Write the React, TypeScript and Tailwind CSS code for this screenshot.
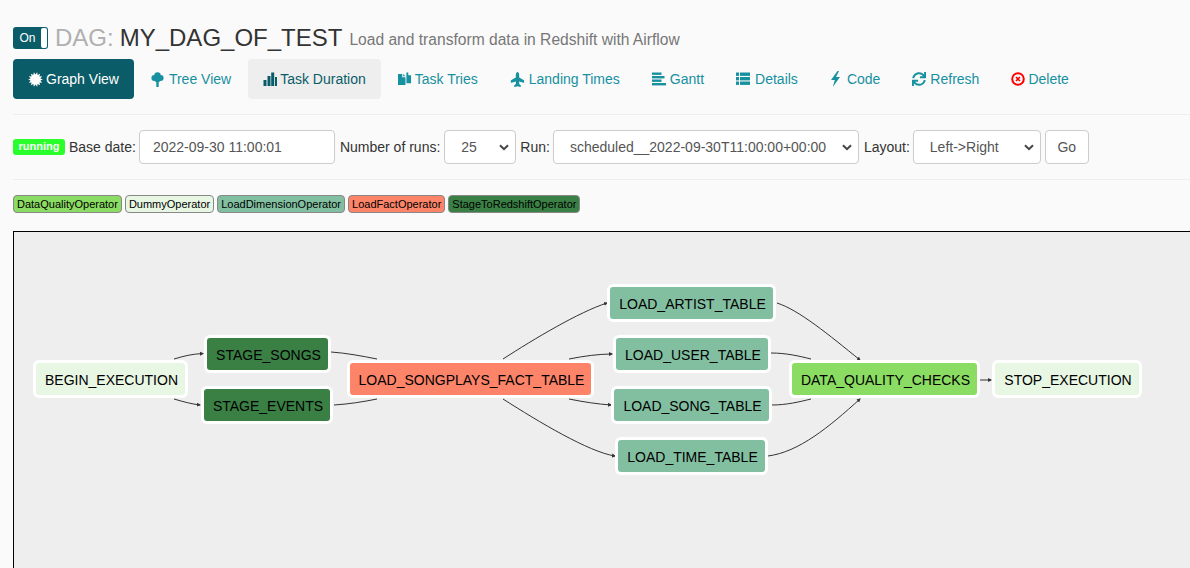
import React from "react";
import { FaPlane, FaSync } from "react-icons/fa";

const font = { fontFamily: '"Liberation Sans", Arial, sans-serif' };

function burst() {
  const pts: string[] = [];
  for (let i = 0; i < 28; i++) {
    const r = i % 2 === 0 ? 7.4 : 5;
    const a = (i / 28) * Math.PI * 2;
    pts.push((7.5 + r * Math.cos(a)).toFixed(2) + "," + (7.5 + r * Math.sin(a)).toFixed(2));
  }
  return pts.join(" ");
}

const IconBurst = () => (
  <svg width="15" height="15" viewBox="0 0 15 15"><polygon points={burst()} fill="currentColor" /></svg>
);
const IconTree = () => (
  <svg width="13" height="15" viewBox="0 0 13 15" fill="currentColor">
    <circle cx="6.5" cy="3.4" r="3.2" /><circle cx="3.4" cy="6" r="3" /><circle cx="9.6" cy="6" r="3" /><circle cx="6.5" cy="7" r="3.2" />
    <rect x="5.3" y="8" width="2.4" height="7" />
  </svg>
);
const IconStats = () => (
  <svg width="14" height="14" viewBox="0 0 14 14" fill="currentColor">
    <rect x="0.5" y="8" width="3" height="6" /><rect x="4.5" y="4" width="3" height="10" /><rect x="8.2" y="0.5" width="3" height="13.5" /><rect x="12" y="5" width="2" height="9" />
  </svg>
);
const IconTries = () => (
  <svg width="15" height="15" viewBox="0 0 15 15" fill="currentColor">
    <path d="M0 1.5 H4.5 V5 H8 V13.5 H0 Z" /><path d="M5.5 1.5 L8 4 H5.5 Z" />
    <path d="M9 0 H11 V3 H14 V11.5 H9 V4 L9 3 Z" />
  </svg>
);
const IconGantt = () => (
  <svg width="14" height="14" viewBox="0 0 14 14" fill="currentColor">
    <rect x="0" y="0.5" width="9.5" height="2.4" /><rect x="0" y="4" width="12.5" height="2.4" /><rect x="0" y="7.5" width="9.5" height="2.4" /><rect x="0" y="11" width="14" height="2.4" />
  </svg>
);
const IconList = () => (
  <svg width="14" height="14" viewBox="0 0 14 14" fill="currentColor">
    {[0.5, 5, 9.5].map((y) => (
      <g key={y}><rect x="0" y={y} width="3" height="3.4" /><rect x="4" y={y} width="10" height="3.4" /></g>
    ))}
  </svg>
);
const IconBolt = () => (
  <svg width="11" height="16" viewBox="0 0 11 16" fill="currentColor"><path d="M7.5 0 L1 9 L4.8 9 L2.8 16 L10 6 L6 6 L9 0 Z" /></svg>
);
const IconDelete = () => (
  <svg width="14" height="14" viewBox="0 0 14 14" fill="none" stroke="#f00">
    <circle cx="7" cy="7" r="5.8" strokeWidth="2" /><path d="M5 5 L9 9 M9 5 L5 9" strokeWidth="1.6" />
  </svg>
);

function Tab({ icon, label, active, hover, iw }: { icon: React.ReactNode; label: string; active?: boolean; hover?: boolean; iw: string }) {
  const cls = active
    ? "bg-[#0a5c68] text-white"
    : hover
    ? "bg-[#eeeeee] text-[#0a5c68]"
    : "text-[#17909f]";
  return (
    <a className={"flex h-10 items-center rounded px-[15px] text-sm " + cls}>
      <span className={"mr-[3px] flex items-center justify-start " + iw}>{icon}</span>
      {label}
    </a>
  );
}

function Legend({ label, cls }: { label: string; cls: string }) {
  return <span className={"flex h-[18px] items-center rounded-[4px] border border-[#888] px-[3px] text-[11px] text-black " + cls}>{label}</span>;
}

function Field({ children, cls }: { children: React.ReactNode; cls: string }) {
  return <div className={"flex h-[34px] items-center rounded border border-[#cccccc] bg-white text-sm text-[#555555] " + cls}>{children}</div>;
}

function Chevron() {
  return (
    <svg width="10" height="7" viewBox="0 0 10 7" className="ml-auto">
      <path d="M1 1.2 L5 5.2 L9 1.2" fill="none" stroke="#444" strokeWidth="2" />
    </svg>
  );
}

const nodes = [
  { t: "BEGIN_EXECUTION", x: 20, y: 129, w: 155, c: "bg-[#e8f7e4]" },
  { t: "STAGE_SONGS", x: 191, y: 104, w: 127, c: "bg-[#3a8045]" },
  { t: "STAGE_EVENTS", x: 188, y: 155, w: 132, c: "bg-[#3a8045]" },
  { t: "LOAD_SONGPLAYS_FACT_TABLE", x: 334, y: 129, w: 247, c: "bg-[#fd8469]" },
  { t: "LOAD_ARTIST_TABLE", x: 594, y: 53, w: 169, c: "bg-[#82bfa1]" },
  { t: "LOAD_USER_TABLE", x: 600, y: 104, w: 158, c: "bg-[#82bfa1]" },
  { t: "LOAD_SONG_TABLE", x: 598, y: 155, w: 161, c: "bg-[#82bfa1]" },
  { t: "LOAD_TIME_TABLE", x: 602, y: 206, w: 153, c: "bg-[#82bfa1]" },
  { t: "DATA_QUALITY_CHECKS", x: 776, y: 129, w: 191, c: "bg-[#8bdc62]" },
  { t: "STOP_EXECUTION", x: 979, y: 129, w: 150, c: "bg-[#e8f7e4]" },
];

// coordinates relative to the canvas's padding box
const edges = [
  { d: "M160 127 C170 124 178 122 189 121.5", m: true },
  { d: "M160 167 C170 170 178 172 186 173", m: true },
  { d: "M317 120 C332 121 348 124 363 127", m: false },
  { d: "M320 173 C335 172 348 170 363 167", m: false },
  { d: "M489 127 C520 107 565 80 593 71", m: true },
  { d: "M555 127 C570 124 585 122 598 122", m: true },
  { d: "M555 167 C570 170 583 172 597 173", m: true },
  { d: "M489 167 C525 190 575 220 601 224", m: true },
  { d: "M763 71 C785 78 815 103 846 128", m: true },
  { d: "M757 121 C772 121 785 124 797 127", m: false },
  { d: "M758 173 C772 173 785 170 797 167", m: false },
  { d: "M754 224 C785 220 815 195 846 167", m: true },
  { d: "M966 148 L977 148", m: true },
];

export default function App() {
  return (
    <div className="h-[568px] w-[1190px] overflow-hidden bg-[#fafafa] pl-[13px] text-[#333333]" style={font}>
      <div className="flex h-[59px] items-center pt-[17px]">
        <div className="flex h-[22px] w-[35px] items-stretch overflow-hidden rounded-[3px] bg-[#0a5c68] p-[1px]">
          <span className="flex flex-1 items-center justify-center text-xs text-white">On</span>
          <span className="w-[6px] rounded-[2px] bg-white"></span>
        </div>
        <span className="ml-[7px] text-2xl text-[#b0b0b0]">DAG:</span>
        <span className="ml-[6px] text-2xl text-[#333333]">MY_DAG_OF_TEST</span>
        <span className="ml-[7px] mt-[3px] text-[15.6px] text-[#777777]">Load and transform data in Redshift with Airflow</span>
      </div>

      <nav className="flex h-10 items-center gap-[2px]">
        <Tab active iw="w-[15px]" label="Graph View" icon={<IconBurst />} />
        <Tab iw="w-[15px]" label="Tree View" icon={<IconTree />} />
        <Tab hover iw="w-[14px]" label="Task Duration" icon={<IconStats />} />
        <Tab iw="w-[14px]" label="Task Tries" icon={<IconTries />} />
        <Tab iw="w-[16px]" label="Landing Times" icon={<FaPlane size={15} className="-rotate-90" />} />
        <Tab iw="w-[15px]" label="Gantt" icon={<IconGantt />} />
        <Tab iw="w-[16px]" label="Details" icon={<IconList />} />
        <Tab iw="w-[14px]" label="Code" icon={<IconBolt />} />
        <Tab iw="w-[15px]" label="Refresh" icon={<FaSync size={14} />} />
        <Tab iw="w-[14px]" label="Delete" icon={<IconDelete />} />
      </nav>

      <div className="mt-[15px] flex h-[66px] items-center border-y border-[#eeeeee] text-sm">
        <span className="flex h-4 w-[52px] items-center justify-center rounded-[3px] bg-[#2bff2b] text-[11px] font-bold text-white">running</span>
        <span className="ml-1">Base date:</span>
        <Field cls="ml-[3px] w-[196px] px-[13px]">2022-09-30 11:00:01</Field>
        <span className="ml-[5px]">Number of runs:</span>
        <Field cls="ml-[4px] w-[72px] pl-4 pr-[6px]">25<Chevron /></Field>
        <span className="ml-1">Run:</span>
        <Field cls="ml-[3px] w-[306px] pl-4 pr-[6px]">scheduled__2022-09-30T11:00:00+00:00<Chevron /></Field>
        <span className="ml-[5px]">Layout:</span>
        <Field cls="ml-[3px] w-[128px] pl-4 pr-[6px]">Left-&gt;Right<Chevron /></Field>
        <Field cls="ml-[4px] w-[44px] justify-center text-[#333333]">Go</Field>
      </div>

      <div className="mt-[15px] flex gap-[3px]">
        <Legend label="DataQualityOperator" cls="bg-[#8bdc62]" />
        <Legend label="DummyOperator" cls="bg-[#e8f7e4]" />
        <Legend label="LoadDimensionOperator" cls="bg-[#82bfa1]" />
        <Legend label="LoadFactOperator" cls="bg-[#fd8469]" />
        <Legend label="StageToRedshiftOperator" cls="bg-[#3a8045]" />
      </div>

      <div className="relative mt-[18px] h-[400px] w-[1300px] border border-black bg-[#eeeeee]">
        <svg className="absolute left-0 top-0" width="1200" height="300" fill="none">
          <defs>
            <marker id="a" markerWidth="5" markerHeight="5" refX="3" refY="2.5" orient="auto" markerUnits="userSpaceOnUse">
              <path d="M0 0.5 L4 2.5 L0 4.5 Z" fill="#333" />
            </marker>
          </defs>
          {edges.map((e) => (
            <path key={e.d} d={e.d} stroke="#333" strokeWidth="1" markerEnd={e.m ? "url(#a)" : undefined} />
          ))}
        </svg>
        {nodes.map((n) => (
          <div
            key={n.t}
            className={"absolute flex h-[38px] items-center justify-center rounded-[6px] border-[3px] border-white pl-[2px] pt-[2px] text-sm text-black " + n.c}
            style={{ left: n.x - 1, top: n.y - 1, width: n.w }}
          >
            {n.t}
          </div>
        ))}
      </div>
    </div>
  );
}
